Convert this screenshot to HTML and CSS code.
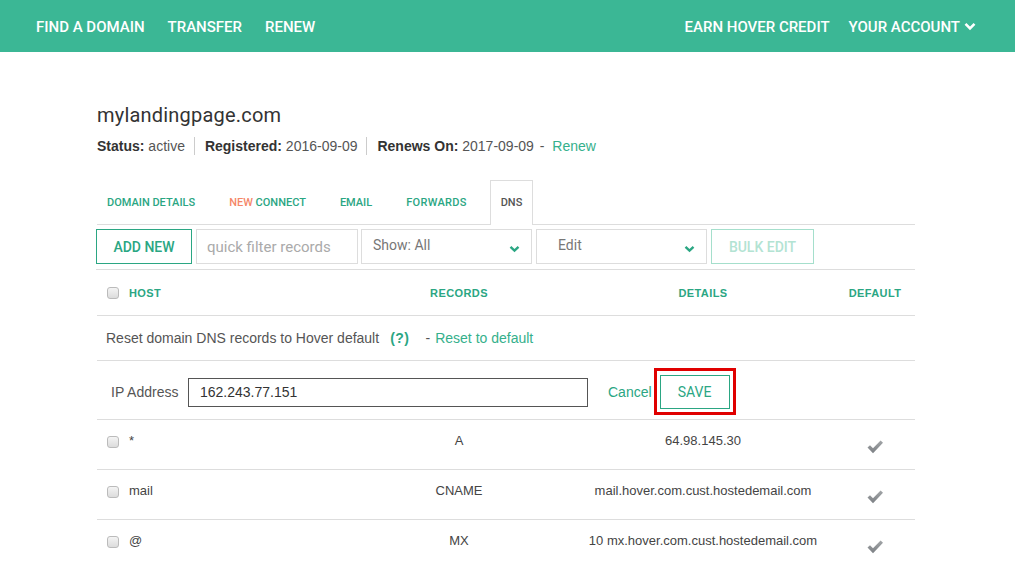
FILE: index.html
```html
<!DOCTYPE html>
<html>
<head>
<meta charset="utf-8">
<link rel="stylesheet" href="styles.css">
</head>
<body>
<header class="topbar">
  <nav class="nav-left">
    <a>FIND A DOMAIN</a>
    <a>TRANSFER</a>
    <a>RENEW</a>
  </nav>
  <nav class="nav-right">
    <a>EARN HOVER CREDIT</a>
    <a class="account">YOUR ACCOUNT
      <svg class="chev-white" width="12" height="9" viewBox="0 0 12 9"><polyline points="1.5,1.8 6,6.3 10.5,1.8" fill="none" stroke="#fff" stroke-width="2.6"/></svg>
    </a>
  </nav>
</header>

<main class="container">
  <h1 class="domain">mylandingpage.com</h1>
  <div class="meta">
    <span class="meta-item"><b>Status:</b> active</span>
    <span class="meta-item"><b>Registered:</b> 2016-09-09</span>
    <span class="meta-item last"><b>Renews On:</b> 2017-09-09 <span class="meta-dash">-</span> <a class="link">Renew</a></span>
  </div>

  <div class="tabs">
    <span class="tab">DOMAIN DETAILS</span>
    <span class="tab"><span class="new">NEW</span> CONNECT</span>
    <span class="tab">EMAIL</span>
    <span class="tab">FORWARDS</span>
    <span class="tab active">DNS</span>
  </div>

  <div class="toolbar">
    <button class="btn-add">ADD NEW</button>
    <div class="filter">quick filter records</div>
    <div class="select show"><span>Show: All</span>
      <svg width="11" height="8" viewBox="0 0 11 8"><polyline points="1.5,1.8 5.5,5.6 9.5,1.8" fill="none" stroke="#2ba683" stroke-width="2.4"/></svg>
    </div>
    <div class="select edit"><span>Edit</span>
      <svg width="11" height="8" viewBox="0 0 11 8"><polyline points="1.5,1.8 5.5,5.6 9.5,1.8" fill="none" stroke="#2ba683" stroke-width="2.4"/></svg>
    </div>
    <button class="btn-bulk">BULK EDIT</button>
  </div>

  <div class="row head">
    <div class="c-host"><span class="cb"></span>HOST</div>
    <div class="c-mid">RECORDS</div>
    <div class="c-mid">DETAILS</div>
    <div class="c-mid">DEFAULT</div>
  </div>

  <div class="reset-row">
    Reset domain DNS records to Hover default <b class="q">(?)</b><span class="dash">-</span><a class="link">Reset to default</a>
  </div>

  <div class="edit-row">
    <label class="ip-label">IP Address</label>
    <div class="ip-input">162.243.77.151</div>
    <a class="cancel">Cancel</a>
    <span class="highlight"><button class="btn-save">SAVE</button></span>
  </div>

  <div class="row data">
    <div class="c-host"><span class="cb"></span>*</div>
    <div class="c-mid">A</div>
    <div class="c-mid">64.98.145.30</div>
    <div class="c-mid"><svg class="check" width="18" height="16" viewBox="0 0 18 16"><defs><linearGradient id="g1" x1="0" y1="0" x2="0" y2="1"><stop offset="0" stop-color="#a3a6a8"/><stop offset="1" stop-color="#7c8084"/></linearGradient></defs><path d="M1.5 8.5 L4 6.2 L7 9.3 L14.6 1.5 L17 3.8 L7 14.2 Z" fill="url(#g1)"/></svg></div>
  </div>
  <div class="row data">
    <div class="c-host"><span class="cb"></span>mail</div>
    <div class="c-mid">CNAME</div>
    <div class="c-mid">mail.hover.com.cust.hostedemail.com</div>
    <div class="c-mid"><svg class="check" width="18" height="16" viewBox="0 0 18 16"><path d="M1.5 8.5 L4 6.2 L7 9.3 L14.6 1.5 L17 3.8 L7 14.2 Z" fill="url(#g1)"/></svg></div>
  </div>
  <div class="row data last">
    <div class="c-host"><span class="cb"></span>@</div>
    <div class="c-mid">MX</div>
    <div class="c-mid">10 mx.hover.com.cust.hostedemail.com</div>
    <div class="c-mid"><svg class="check" width="18" height="16" viewBox="0 0 18 16"><path d="M1.5 8.5 L4 6.2 L7 9.3 L14.6 1.5 L17 3.8 L7 14.2 Z" fill="url(#g1)"/></svg></div>
  </div>
</main>
</body>
</html>
```

FILE: styles.css
```css
* { box-sizing: border-box; }
html, body { margin: 0; padding: 0; background: #fff; }
body { font-family: "Liberation Sans", Arial, sans-serif; color: #555; overflow: hidden; }
a { text-decoration: none; cursor: pointer; }

.topbar {
  height: 52px;
  background: #3bb795;
  display: flex;
  align-items: center;
  justify-content: space-between;
  padding: 2px 39px 0 36px;
  font-family: Roboto, "Noto Sans", sans-serif;
  font-weight: 500;
  font-size: 15px;
  color: #fff;
}
.nav-left, .nav-right { display: flex; gap: 23px; align-items: center; }
.nav-right { gap: 19px; }
.account { display: flex; align-items: center; gap: 4px; }
.chev-white { margin-top: -2px; }

.container { margin-left: 97px; width: 818px; }

.domain {
  margin: 50px 0 0 0;
  font-family: Roboto, "Noto Sans", sans-serif;
  font-weight: 400;
  font-size: 20px;
  line-height: 26px;
  color: #333;
  letter-spacing: 0.2px;
}
.meta {
  margin-top: 9px;
  font-size: 14px;
  line-height: 18px;
  color: #555;
  display: flex;
}
.meta b { color: #333; }
.meta-item { padding-right: 9px; margin-right: 10px; border-right: 1px solid #ccc; }
.meta-item.last { border-right: 0; }
.meta-dash { margin: 0 2px; }
.link { color: #35b08c; }
.meta .link { margin-left: 2px; }

.tabs {
  margin-top: 25px;
  height: 45px;
  border-bottom: 1px solid #ddd;
  display: flex;
  align-items: flex-end;
  font-family: Roboto, "Noto Sans", sans-serif;
  font-size: 11px;
  font-weight: 500;
  color: #2ba683;
}
.tab {
  height: 45px;
  line-height: 43px;
  padding: 0 10px;
  margin-right: 12px;
  margin-bottom: -1px;
  border: 1px solid transparent;
  border-bottom: 0;
}
.tab:first-child { margin-left: -1px; }
.tab:nth-child(4) { letter-spacing: 0.3px; }
.tab .new { color: #f58769; }
.tab.active {
  color: #555;
  border-color: #ddd;
  background: #fff;
}

.toolbar {
  display: flex;
  gap: 4px;
  padding: 4px 0 5px 0;
  border-bottom: 1px solid #ddd;
  margin-left: -1px;
}
.btn-add {
  width: 96px; height: 35px;
  background: #fff;
  border: 1px solid #2ba683;
  color: #2ba683;
  font-family: Roboto, "Noto Sans", sans-serif;
  font-size: 14px;
  font-weight: 500;
  padding: 0;
}
.filter {
  width: 162px; height: 35px;
  border: 1px solid #ddd;
  color: #aaa;
  font-family: Roboto, "Noto Sans", sans-serif;
  font-size: 15px;
  padding: 8px 0 0 10px;
}
.select {
  width: 171px; height: 35px;
  border: 1px solid #ddd;
  display: flex;
  justify-content: space-between;
  padding: 0 11px 0 11px;
  font-family: Roboto, "Noto Sans", sans-serif;
  font-size: 14px;
  color: #777;
}
.select span { padding-top: 7px; }
.select svg { margin-top: 15px; }
.select.show { margin-left: -1px; }
.select.edit { padding-left: 21px; }
.btn-bulk {
  width: 103px; height: 35px;
  background: #fff;
  border: 1px solid #a5dfcc;
  color: #b3e3d3;
  font-family: Roboto, "Noto Sans", sans-serif;
  font-size: 14px;
  font-weight: 500;
  padding: 0;
}

.row {
  display: grid;
  grid-template-columns: 250px 224px 264px 80px;
  border-bottom: 1px solid #ddd;
}
.row .c-mid { text-align: center; }
.c-host { display: flex; align-items: center; padding-left: 10px; }
.cb {
  width: 12px; height: 12px;
  border: 1px solid #bbb;
  border-radius: 3px;
  background: linear-gradient(#f4f4f4, #dcdcdc);
  margin-right: 10px;
  display: inline-block;
}
.row.head {
  height: 46px;
  align-items: center;
  font-size: 11px;
  font-weight: bold;
  color: #2ba683;
  letter-spacing: 0.4px;
}
.row.head .c-host { padding-top: 1px; }

.reset-row {
  height: 45px;
  border-bottom: 1px solid #ddd;
  display: flex;
  align-items: center;
  padding-left: 9px;
  font-size: 14px;
  color: #555;
}
.q { color: #2ba683; margin-left: 11px; letter-spacing: 0.5px; }
.dash { margin: 0 5px 0 16px; }

.edit-row {
  height: 59px;
  border-bottom: 1px solid #ddd;
  display: flex;
  align-items: center;
  padding: 4px 0 0 14px;
  font-size: 14px;
}
.ip-label { color: #555; width: 77px; }
.ip-input {
  width: 400px; height: 29px;
  border: 1px solid #555;
  padding: 5px 0 0 11px;
  color: #333;
  font-size: 14px;
}
.cancel { color: #2ba683; margin-left: 20px; }
.highlight {
  border: 3px solid #e00000;
  padding: 4px 3px 3px 3px;
  margin-left: 2px;
  display: inline-flex;
  margin-top: -2px;
}
.btn-save {
  width: 70px; height: 34px;
  background: #fff;
  border: 1px solid #2ba683;
  color: #2ba683;
  font-family: Roboto, "Noto Sans", sans-serif;
  font-size: 14px;
  padding: 0;
}

.row.data {
  height: 50px;
  font-size: 13px;
  color: #444;
  align-items: start;
}
.row.data .c-host, .row.data .c-mid { padding-top: 13px; line-height: 16px; }
.row.data .c-host .cb { margin-top: 1px; }
.row.data .check { margin-top: 6px; }
.row.data.last { border-bottom: 0; }
```
